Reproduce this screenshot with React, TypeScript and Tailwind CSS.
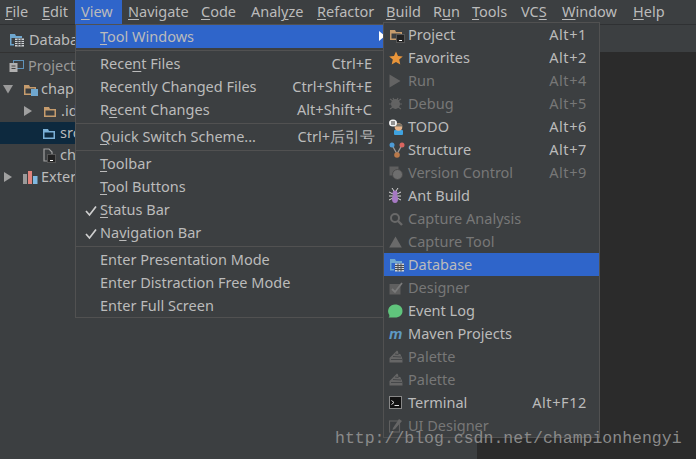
import React from 'react';

const font = "font-['Noto_Sans',sans-serif]";

// the mnemonic letter is wrapped in [ ]
const Label = ({ text }: { text: string }) => {
  const m = text.match(/^(.*)\[(.)\](.*)$/);
  if (!m) return <span>{text}</span>;
  return (
    <span>
      {m[1]}
      <u className="underline underline-offset-2 decoration-1">{m[2]}</u>
      {m[3]}
    </span>
  );
};

const TopItem = ({ text, w, active }: { text: string; w: string; active?: boolean }) => (
  <div className={`h-[24px] flex items-center pl-[6px] ${w} ${active ? 'bg-[#2f65ca]' : ''}`}>
    <Label text={text} />
  </div>
);

const Check = () => (
  <svg width="12" height="12" viewBox="0 0 12 12" className="absolute left-[9px] top-[7px]">
    <path d="M1 6 L4.5 10 L11 1.5" fill="none" stroke="#cfcfcf" strokeWidth="1.7" />
  </svg>
);

const Row = ({ text, hl, checked }: { text: string; hl?: boolean; checked?: boolean }) => (
  <div className={`relative h-[23px] pl-[24px] flex items-center whitespace-nowrap ${hl ? 'bg-[#2f65ca]' : ''}`}>
    {checked && <Check />}
    <Label text={text} />
  </div>
);

const Key = ({ text, k, pr = 'pr-[12px]' }: { text: string; k: string; pr?: string }) => (
  <div className={`h-[23px] pl-[24px] flex items-center justify-between whitespace-nowrap ${pr}`}>
    <Label text={text} />
    <span>{k}</span>
  </div>
);

const Sep = () => (
  <div className="flex items-center h-[4px]">
    <div className="h-px w-full bg-[#515151]" />
  </div>
);

const Folder = ({ color = '#c69c6d' }: { color?: string }) => (
  <svg width="14" height="13" viewBox="0 0 14 13">
    <path d="M1 2 H6 L7 4 H13 V12 H1 Z M2.5 5.5 V10.5 H11.5 V5.5 Z" fill={color} fillRule="evenodd" />
  </svg>
);

const Term = () => (
  <span className="absolute right-0 bottom-0 w-[9px] h-[9px] bg-[#222] border border-[#555] flex items-end justify-center">
    <span className="w-[3px] h-px bg-white mb-px" />
  </span>
);

const DbIcon = () => (
  <svg width="16" height="14" viewBox="0 0 16 14">
    <path d="M1 1 H6 L7 3 H13 V5 H2.5 V11 H5 V12.5 H1 Z" fill="#6fa7cf" />
    <rect x="6" y="5.5" width="9" height="8" fill="#cfd3d6" />
    <path d="M6 7.5 H15 M6 9.5 H15 M6 11.5 H15 M9 5.5 V13.5 M12 5.5 V13.5" stroke="#4a4d50" strokeWidth="1" />
  </svg>
);

const Ico = ({ name }: { name: string }) => {
  switch (name) {
    case 'project':
      return (
        <span className="relative block w-[16px] h-[16px]">
          <span className="absolute left-0 top-[1px]"><Folder /></span>
          <Term />
        </span>
      );
    case 'star':
      return (
        <svg width="14" height="14" viewBox="0 0 14 14">
          <path d="M7 0.5 L9 5 L13.8 5.4 L10.2 8.6 L11.3 13.4 L7 10.9 L2.7 13.4 L3.8 8.6 L0.2 5.4 L5 5Z" fill="#e9953a" />
        </svg>
      );
    case 'run':
      return (
        <svg width="12" height="14" viewBox="0 0 12 14">
          <path d="M0.5 0.5 L11.5 7 L0.5 13.5Z" fill="#636363" />
        </svg>
      );
    case 'debug':
      return (
        <svg width="14" height="14" viewBox="0 0 14 14">
          <ellipse cx="6.5" cy="7" rx="4.5" ry="5" fill="#636363" />
          <path d="M1 2 L4 4 M12 2 L9 4 M0 7 H13 M1 12 L4 10 M12 12 L9 10 M4 1 L5 3 M9 1 L8 3" stroke="#636363" strokeWidth="1.2" />
        </svg>
      );
    case 'todo':
      return (
        <svg width="16" height="16" viewBox="0 0 16 16">
          <rect x="5" y="11" width="9" height="5" rx="1" fill="#3fa3e0" />
          <circle cx="9.5" cy="8" r="3.8" fill="#e8b48a" />
          <path d="M5.5 6.5 Q9.5 2.5 13.5 6.5 V7.5 H5.5Z" fill="#7a7468" />
          <ellipse cx="4" cy="4" rx="4" ry="3.5" fill="#f2f2f2" />
          <path d="M2 3 H6 M2 5 H6" stroke="#333" strokeWidth="1" />
        </svg>
      );
    case 'structure':
      return (
        <svg width="16" height="16" viewBox="0 0 16 16">
          <path d="M3 3 L8 12 L13 3" fill="none" stroke="#9a9a9a" strokeWidth="1.3" />
          <circle cx="3" cy="3" r="2.5" fill="#4d9bd6" />
          <circle cx="13" cy="3" r="2.5" fill="#d9655f" />
          <circle cx="8" cy="13" r="2.8" fill="#b9794a" />
        </svg>
      );
    case 'vcs':
      return (
        <svg width="14" height="14" viewBox="0 0 14 14">
          <rect x="0.5" y="0.5" width="9" height="9" fill="#5f5f5f" />
          <circle cx="8.5" cy="8.5" r="5" fill="#6e6e6e" stroke="#4b4b4b" />
        </svg>
      );
    case 'ant':
      return (
        <svg width="12" height="16" viewBox="0 0 12 16">
          <path d="M0 4 L4 6 M12 4 L8 6 M0 8 H12 M0 12 L4 10 M12 12 L8 10 M3 0 L5 3 M9 0 L7 3" stroke="#d8d8d8" strokeWidth="1" />
          <ellipse cx="6" cy="5" rx="2.5" ry="2.5" fill="#a779c4" />
          <ellipse cx="6" cy="11" rx="3" ry="4" fill="#a779c4" />
        </svg>
      );
    case 'capture':
      return (
        <svg width="14" height="14" viewBox="0 0 14 14">
          <circle cx="6" cy="6" r="4" fill="none" stroke="#696969" strokeWidth="2" />
          <path d="M9 9 L13 13" stroke="#696969" strokeWidth="2.4" />
        </svg>
      );
    case 'tool':
      return (
        <svg width="13" height="12" viewBox="0 0 13 12">
          <path d="M6.5 0.5 L12.8 11.5 H0.2Z" fill="#6a6a6a" />
        </svg>
      );
    case 'db':
      return <DbIcon />;
    case 'designer':
      return (
        <svg width="14" height="14" viewBox="0 0 14 14">
          <rect x="0.5" y="3" width="11" height="10.5" fill="#5f5f5f" />
          <path d="M3 8 L6 11 L13 2" fill="none" stroke="#7a7a7a" strokeWidth="1.8" />
        </svg>
      );
    case 'event':
      return (
        <svg width="16" height="14" viewBox="0 0 16 14" className="-ml-[2px]">
          <path d="M8 0.5 C12.5 0.5 15.5 3 15.5 7 C15.5 11 12.5 13.5 8 13.5 H1.5 C3 12.5 2.5 11 1.5 9.5 C0 5 3 0.5 8 0.5Z" fill="#60c47c" />
        </svg>
      );
    case 'maven':
      return <span className="font-['Liberation_Sans',sans-serif] font-bold italic text-[15px] leading-[14px] text-[#5e99c4]">m</span>;
    case 'palette':
      return (
        <svg width="14" height="13" viewBox="0 0 14 13">
          <path d="M0.5 8 L8 0.5 C9.5 1.5 9.5 3 9 4 C11 3.5 12 4.5 12 6 C13 6.5 13.5 9 13.5 12.5 H0.5Z" fill="#666" />
          <path d="M2 9.5 H13 M4 6.5 L12 7 M6 4 L9.5 4.5" stroke="#3c3f41" strokeWidth="0.8" />
        </svg>
      );
    case 'term':
      return (
        <span className="block w-[13px] h-[13px] bg-[#111] border border-[#888] pl-px pt-[3px]">
          <svg width="9" height="7" viewBox="0 0 9 7" className="block">
            <path d="M0.5 0.5 L3 2.5 L0.5 4.5 M3.5 5.5 H8" fill="none" stroke="#ddd" strokeWidth="1" />
          </svg>
        </span>
      );
    case 'ui':
      return (
        <svg width="14" height="15" viewBox="0 0 14 15">
          <rect x="0.5" y="3" width="10" height="11" fill="none" stroke="#606060" strokeWidth="1.2" />
          <path d="M4 10 L10 1 L13 3 L6 11 L3.5 12Z" fill="#666" />
        </svg>
      );
    default:
      return null;
  }
};

type Win = { icon: string; text: string; k?: string; off?: boolean; hl?: boolean };

const windows: Win[] = [
  { icon: 'project', text: 'Project', k: 'Alt+1' },
  { icon: 'star', text: 'Favorites', k: 'Alt+2' },
  { icon: 'run', text: 'Run', k: 'Alt+4', off: true },
  { icon: 'debug', text: 'Debug', k: 'Alt+5', off: true },
  { icon: 'todo', text: 'TODO', k: 'Alt+6' },
  { icon: 'structure', text: 'Structure', k: 'Alt+7' },
  { icon: 'vcs', text: 'Version Control', k: 'Alt+9', off: true },
  { icon: 'ant', text: 'Ant Build' },
  { icon: 'capture', text: 'Capture Analysis', off: true },
  { icon: 'tool', text: 'Capture Tool', off: true },
  { icon: 'db', text: 'Database', hl: true },
  { icon: 'designer', text: 'Designer', off: true },
  { icon: 'event', text: 'Event Log' },
  { icon: 'maven', text: 'Maven Projects' },
  { icon: 'palette', text: 'Palette', off: true },
  { icon: 'palette', text: 'Palette', off: true },
  { icon: 'term', text: 'Terminal', k: 'Alt+F12' },
  { icon: 'ui', text: 'UI Designer', off: true },
];

const Arrow = ({ open, color = '#9a9a9a' }: { open?: boolean; color?: string }) => (
  <svg width="10" height="10" viewBox="0 0 10 10">
    <path d={open ? 'M0 1 H10 L5 9.5Z' : 'M1 0 V10 L9 5Z'} fill={color} />
  </svg>
);

const TreeRow = ({ left, children, hl }: { left: string; children: React.ReactNode; hl?: boolean }) => (
  <div className={`h-[22px] flex items-center gap-[4px] whitespace-nowrap ${left} ${hl ? 'bg-[#0d293e]' : ''}`}>
    {children}
  </div>
);

export default function App() {
  return (
    <div className={`relative w-[696px] h-[459px] overflow-hidden bg-[#3c3f41] text-[14.5px] text-[#bbbbbb] ${font}`}>
      {/* Main menu */}
      <div className="h-[24px] flex items-center border-b border-[#2f3133] box-content">
        <div className="flex -ml-[1px]">
          <TopItem w="w-[37px]" text="[F]ile" />
          <TopItem w="w-[39px]" text="[E]dit" />
          <TopItem w="w-[47px]" text="[V]iew" active />
          <TopItem w="w-[73px]" text="[N]avigate" />
          <TopItem w="w-[50px]" text="[C]ode" />
          <TopItem w="w-[66px]" text="Anal[y]ze" />
          <TopItem w="w-[69px]" text="[R]efactor" />
          <TopItem w="w-[47px]" text="[B]uild" />
          <TopItem w="w-[39px]" text="R[u]n" />
          <TopItem w="w-[49px]" text="[T]ools" />
          <TopItem w="w-[41px]" text="VC[S]" />
          <TopItem w="w-[71px]" text="[W]indow" />
          <TopItem w="w-[50px]" text="[H]elp" />
        </div>
      </div>

      <div className="flex h-[434px]">
        {/* Tool window */}
        <div className="w-[477px] shrink-0">
          <div className="h-[28px] pt-[2px] pl-[9px] flex items-center gap-[4px] border-b border-[#323232]">
            <DbIcon />
            <span>Database</span>
          </div>
          <div className="h-[25px] pt-px pl-[9px] flex items-center gap-[4px] text-[#999]">
            <svg width="15" height="13" viewBox="0 0 15 13">
              <rect x="4.5" y="0.5" width="10" height="8" fill="none" stroke="#5f93ba" />
              <rect x="0.5" y="3" width="8" height="9" fill="#b0b0b0" />
              <path d="M2.5 6 H6.5 M2.5 8.5 H6.5" stroke="#444" />
            </svg>
            <span>Project</span>
          </div>
          <TreeRow left="pl-[3px]">
            <Arrow open />
            <span className="ml-[6px] relative block w-[15px] h-[13px]">
              <Folder />
              <span className="absolute right-0 bottom-0 w-[7px] h-[7px] bg-[#6fa7cf]" />
            </span>
            <span className="-ml-[1px]">chap</span>
          </TreeRow>
          <TreeRow left="pl-[23px]">
            <Arrow color="#a0a0a0" />
            <span className="ml-[6px]"><Folder /></span>
            <span>.idea</span>
          </TreeRow>
          <TreeRow left="pl-[42px]" hl>
            <Folder color="#7bb0d6" />
            <span>src</span>
          </TreeRow>
          <TreeRow left="pl-[43px]">
            <span className="relative block w-[13px] h-[15px]">
              <svg width="10" height="14" viewBox="0 0 10 14" className="absolute left-0 top-0">
                <path d="M1 1 H6 L9 4 V13 H1 Z" fill="none" stroke="#a0a0a0" strokeWidth="1.2" />
              </svg>
              <Term />
            </span>
            <span>chap.iml</span>
          </TreeRow>
          <TreeRow left="pl-[3px]">
            <Arrow color="#a0a0a0" />
            <svg width="15" height="13" viewBox="0 0 15 13" className="ml-[6px]">
              <rect x="0" y="3" width="4" height="10" fill="#9a9a9a" />
              <rect x="5" y="0" width="4" height="13" fill="#e0837c" />
              <rect x="10" y="5" width="4.5" height="8" fill="#7fb8e0" />
            </svg>
            <span className="-ml-[1px]">External Libraries</span>
          </TreeRow>
        </div>
        {/* Editor area */}
        <div className="flex-1 flex flex-col">
          <div className="h-[27px] shrink-0" />
          <div className="flex-1 bg-[#2b2b2b]" />
        </div>
      </div>

      {/* View menu */}
      <div className="absolute left-[75px] top-[24px] w-[310px] h-[294px] bg-[#3c3f41] border border-[#515151]">
        <Row text="[T]ool Windows" hl />
        <Sep />
        <Key text="Rece[n]t Files" k="Ctrl+E" />
        <Key text="Recently Changed Files" k="Ctrl+Shift+E" />
        <Key text="R[e]cent Changes" k="Alt+Shift+C" />
        <Sep />
        <Key text="[Q]uick Switch Scheme..." k="Ctrl+后引号" pr="pr-[9px]" />
        <Sep />
        <Row text="[T]oolbar" />
        <Row text="[T]ool Buttons" />
        <Row text="[S]tatus Bar" checked />
        <Row text="Na[v]igation Bar" checked />
        <Sep />
        <Row text="Enter Presentation Mode" />
        <Row text="Enter Distraction Free Mode" />
        <Row text="Enter Full Screen" />
      </div>
      <svg width="6" height="10" viewBox="0 0 6 10" className="absolute left-[379px] top-[31px]">
        <path d="M0 0 L6 5 L0 10Z" fill="#ffffff" />
      </svg>

      {/* Tool Windows submenu */}
      <div className="absolute left-[383px] top-[22px] w-[217px] h-[416px] bg-[#3c3f41] border border-[#515151]">
        {windows.map((w, i) => (
          <div
            key={i}
            className={`h-[23px] pr-[12px] flex items-center justify-between whitespace-nowrap ${w.hl ? 'bg-[#2f65ca]' : ''} ${w.off ? 'text-[#777777]' : ''}`}
          >
            <div className="flex items-center">
              <span className="w-[24px] pl-[5px] flex items-center shrink-0"><Ico name={w.icon} /></span>
              <span>{w.text}</span>
            </div>
            {w.k && <span className="tracking-[0.6px]">{w.k}</span>}
          </div>
        ))}
      </div>

      {/* Blog watermark */}
      <div className="absolute left-[335px] top-[429px] text-[16.5px] leading-[20px] whitespace-nowrap text-[#8a8a8a] font-['Liberation_Mono',monospace]">
        http://blog.csdn.net/championhengyi
      </div>
    </div>
  );
}
